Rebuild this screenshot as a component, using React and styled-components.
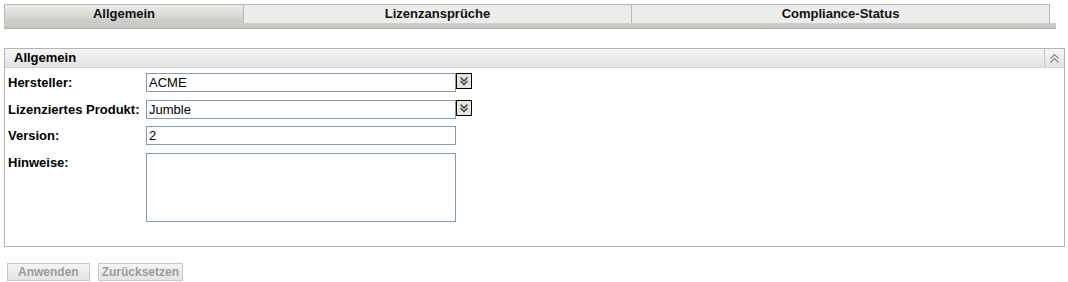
import React from 'react';
import styled, { createGlobalStyle } from 'styled-components';

const GlobalStyle = createGlobalStyle`
  body {
    margin: 0;
    background: #ffffff;
    font-family: "Liberation Sans", Arial, sans-serif;
    font-size: 12px;
    color: #000;
  }
`;

const Page = styled.div`
  width: 1068px;
  height: 282px;
  padding: 4px 0 0 4px;
  box-sizing: border-box;
`;

const TabStrip = styled.div`
  display: flex;
  width: 1046px;
  height: 19px;
`;

const Tab = styled.div`
  width: ${(p) => p.$width}px;
  box-sizing: border-box;
  border: 1px solid #b8b8b4;
  border-bottom: none;
  border-left: ${(p) => (p.$first ? '1px solid #b8b8b4' : 'none')};
  background: ${(p) =>
    p.$active
      ? 'linear-gradient(#ececea, #d8d8d4 60%, #c8c8c4)'
      : '#ececea'};
  font-weight: bold;
  font-size: 13px;
  line-height: 18px;
  text-align: center;
  color: #111;
`;

const TabBar = styled.div`
  width: 1052px;
  height: 6px;
  background: linear-gradient(#d0d0cc, #c0c0bc);
  border-bottom: 1px solid #b0b0ac;
  box-sizing: border-box;
`;

const Panel = styled.div`
  margin-top: 19px;
  width: 1061px;
  height: 199px;
  box-sizing: border-box;
  border: 1px solid #b4b4b4;
`;

const PanelHeader = styled.div`
  display: flex;
  height: 18px;
  background: linear-gradient(#f6f6f6, #e2e2e2);
  border-bottom: 1px solid #d4d4d4;
`;

const PanelTitle = styled.div`
  flex: 1;
  padding-left: 9px;
  font-weight: bold;
  font-size: 13px;
  line-height: 18px;
`;

const CollapseButton = styled.div`
  width: 19px;
  border-left: 1px solid #c4c4c4;
  display: flex;
  align-items: center;
  justify-content: center;
`;

const Form = styled.div`
  display: grid;
  grid-template-columns: 138px 310px 16px;
  grid-template-rows: 27px 26px 27px 69px;
  padding: 5px 0 0 3px;
  align-items: start;
`;

const Label = styled.div`
  font-weight: bold;
  font-size: 13px;
  line-height: 19px;
  white-space: nowrap;
`;

const Input = styled.div`
  height: 19px;
  box-sizing: border-box;
  border: 1px solid #7f9db9;
  padding-left: 2px;
  line-height: 17px;
  font-size: 13px;
  background: #fff;
`;

const TextArea = styled.div`
  height: 69px;
  box-sizing: border-box;
  border: 1px solid #7f9db9;
  background: #fff;
`;

const DropButton = styled.div`
  width: 16px;
  height: 16px;
  box-sizing: border-box;
  border: 1px solid #000;
  background: #e8e6dc;
  display: flex;
  align-items: center;
  justify-content: center;
`;

const Actions = styled.div`
  display: flex;
  gap: 8px;
  margin-top: 16px;
  padding-left: 3px;
`;

const ActionButton = styled.div`
  height: 18px;
  box-sizing: border-box;
  border: 1px solid #c8c8c8;
  background: linear-gradient(#f4f4f4, #e4e4e4);
  color: #9c9c9c;
  font-weight: bold;
  font-size: 12px;
  line-height: 16px;
  padding: 0 ${(p) => p.$pad}px;
`;

const DoubleDown = () => (
  <svg width="10" height="10" viewBox="0 0 10 10">
    <path d="M1.5 1.5 L5 5 L8.5 1.5 M1.5 5 L5 8.5 L8.5 5" fill="none" stroke="#333" strokeWidth="1.3" />
  </svg>
);

const DoubleUp = () => (
  <svg width="11" height="11" viewBox="0 0 11 11">
    <path d="M1.5 5.5 L5.5 1.5 L9.5 5.5 M1.5 9.5 L5.5 5.5 L9.5 9.5" fill="none" stroke="#888" strokeWidth="1.1" />
  </svg>
);

export default function App() {
  return (
    <Page>
      <GlobalStyle />
      <TabStrip>
        <Tab $width={240} $first $active>Allgemein</Tab>
        <Tab $width={388}>Lizenzansprüche</Tab>
        <Tab $width={418}>Compliance-Status</Tab>
      </TabStrip>
      <TabBar />

      <Panel>
        <PanelHeader>
          <PanelTitle>Allgemein</PanelTitle>
          <CollapseButton>
            <DoubleUp />
          </CollapseButton>
        </PanelHeader>
        <Form>
          <Label>Hersteller:</Label>
          <Input>ACME</Input>
          <DropButton><DoubleDown /></DropButton>

          <Label>Lizenziertes Produkt:</Label>
          <Input>Jumble</Input>
          <DropButton><DoubleDown /></DropButton>

          <Label>Version:</Label>
          <Input>2</Input>
          <span />

          <Label>Hinweise:</Label>
          <TextArea />
          <span />
        </Form>
      </Panel>

      <Actions>
        <ActionButton $pad={10}>Anwenden</ActionButton>
        <ActionButton $pad={3}>Zurücksetzen</ActionButton>
      </Actions>
    </Page>
  );
}
